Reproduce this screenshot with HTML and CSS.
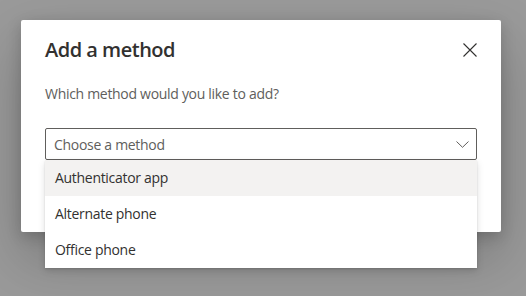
FILE: index.html
```html
<!DOCTYPE html>
<html>
<head>
<meta charset="utf-8">
<link rel="stylesheet" href="styles.css">
</head>
<body>
<div class="dialog">
  <div class="header">
    <div class="title">Add a method</div>
    <div class="close">
      <svg width="14" height="14" viewBox="0 0 14 14"><path d="M0.5 0.5 L13.5 13.5 M13.5 0.5 L0.5 13.5" stroke="#323130" stroke-width="1.1" fill="none"/></svg>
    </div>
  </div>
  <div class="body">
    <div class="subtitle">Which method would you like to add?</div>
    <div class="dropdown-wrap">
      <div class="dropdown">
        <span class="placeholder">Choose a method</span>
        <svg width="13" height="7" viewBox="0 0 13 7"><polyline points="0.5,0.5 6.5,6.3 12.5,0.5" stroke="#605e5c" stroke-width="1" fill="none"/></svg>
      </div>
      <div class="menu">
        <div class="item active">Authenticator app</div>
        <div class="item">Alternate phone</div>
        <div class="item">Office phone</div>
      </div>
    </div>
  </div>
</div>
</body>
</html>
```
FILE: styles.css
```css
html, body {
  margin: 0;
  padding: 0;
}
body {
  width: 526px;
  height: 296px;
  background: #9a9a9a;
  font-family: "Open Sans", "Noto Sans", sans-serif;
  overflow: hidden;
  padding: 20px 0 0 21px;
  box-sizing: border-box;
}
.dialog {
  width: 480px;
  height: 212px;
  background: #ffffff;
  border-radius: 2px;
  box-shadow: 0 25.6px 57.6px rgba(0,0,0,0.22), 0 4.8px 14.4px rgba(0,0,0,0.18);
}
.header {
  display: flex;
  align-items: center;
  justify-content: space-between;
  padding: 16px 15px 20px 24px;
}
.title {
  font-size: 20px;
  font-weight: 600;
  line-height: 28px;
  color: #323130;
  letter-spacing: -0.5px;
}
.close {
  width: 32px;
  height: 32px;
  margin: -2px 0;
  display: flex;
  align-items: center;
  justify-content: center;
}
.body {
  padding: 0 24px;
}
.subtitle {
  font-size: 14px;
  line-height: 20px;
  color: #605e5c;
  letter-spacing: -0.3px;
}
.dropdown-wrap {
  position: relative;
  margin-top: 24px;
}
.dropdown {
  height: 32px;
  box-sizing: border-box;
  border: 1px solid #605e5c;
  border-radius: 2px;
  display: flex;
  align-items: center;
  justify-content: space-between;
  padding: 0 7px 0 8px;
}
.placeholder {
  font-size: 14px;
  color: #605e5c;
  letter-spacing: -0.3px;
}
.menu {
  position: absolute;
  left: 0;
  right: 0;
  top: 32px;
  background: #ffffff;
  box-shadow: 0 3.2px 7.2px rgba(0,0,0,0.132), 0 0.6px 1.8px rgba(0,0,0,0.108);
}
.item {
  height: 36px;
  line-height: 36px;
  padding-left: 10px;
  font-size: 14px;
  color: #323130;
  letter-spacing: -0.3px;
}
.item.active {
  background: #f3f2f1;
}
```
